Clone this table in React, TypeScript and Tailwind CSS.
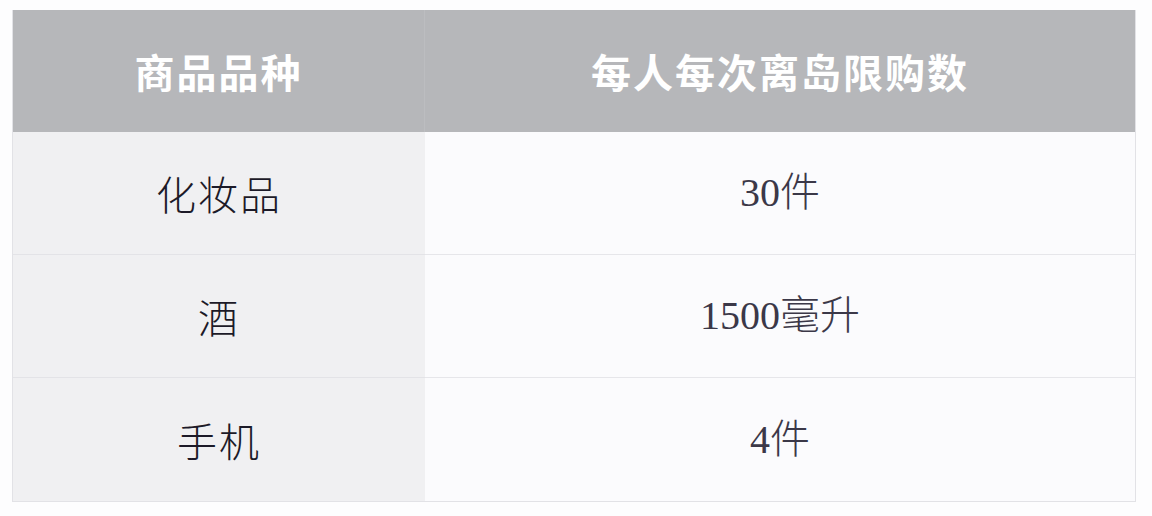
const rows = [
  { name: "化妆品", limit: "30件" },
  { name: "酒", limit: "1500毫升" },
  { name: "手机", limit: "4件" },
]

export default function App() {
  return (
    <div className="w-[1152px] h-[516px] bg-[#fdfdfe] pt-[10px] pl-[12px]">
      <div className="w-[1124px] border-b border-l border-r border-[#e2e2e6] grid grid-cols-[412px_1fr]">
        {/* Header */}
        <div className="h-[122px] bg-[#b6b7ba] border-r border-[#bcbdc0] flex items-center justify-center">
          <span className="text-white text-[40px] font-bold tracking-[2px] [font-family:'Noto_Sans_CJK_SC',sans-serif]">
            商品品种
          </span>
        </div>
        <div className="h-[122px] bg-[#b6b7ba] flex items-center justify-center">
          <span className="text-white text-[40px] font-bold tracking-[2px] [font-family:'Noto_Sans_CJK_SC',sans-serif]">
            每人每次离岛限购数
          </span>
        </div>

        {/* Body */}
        {rows.map((row, i) => (
          <div key={row.name} className="contents">
            <div
              className={`h-[123px] bg-[#f0f0f2] flex items-center justify-center ${i < rows.length - 1 ? "border-b border-[#e3e3e7]" : ""}`}
            >
              <span className="text-[#1c1a28] text-[40px] font-light tracking-[2px] [font-family:'Noto_Sans_CJK_SC',sans-serif]">
                {row.name}
              </span>
            </div>
            <div
              className={`h-[123px] bg-[#fbfbfd] flex items-center justify-center ${i < rows.length - 1 ? "border-b border-[#e6e6ea]" : ""}`}
            >
              <span className="text-[#3b3848] text-[40px] font-light [font-family:'Liberation_Serif','Noto_Sans_CJK_SC',serif]">
                {row.limit}
              </span>
            </div>
          </div>
        ))}
      </div>
    </div>
  )
}
